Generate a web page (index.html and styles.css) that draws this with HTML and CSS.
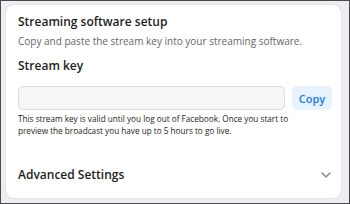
FILE: index.html
```html
<!DOCTYPE html>
<html>
<head>
<meta charset="utf-8">
<link rel="stylesheet" href="styles.css">
</head>
<body>
<div class="frame">
  <div class="card">
    <h2 class="title">Streaming software setup</h2>
    <p class="sub">Copy and paste the stream key into your streaming software.</p>
    <h3 class="label">Stream key</h3>
    <div class="keyrow">
      <div class="input"></div>
      <button class="copy">Copy</button>
    </div>
    <p class="help">This stream key is valid until you log out of Facebook. Once you start to preview the broadcast you have up to 5 hours to go live.</p>
    <div class="adv">
      <span class="adv-label">Advanced Settings</span>
      <svg class="chev" width="10" height="6" viewBox="0 0 10 6"><path d="M1 1 L5 5 L9 1" fill="none" stroke="#8a8d91" stroke-width="1.6" stroke-linecap="round" stroke-linejoin="round"/></svg>
    </div>
  </div>
</div>
</body>
</html>
```
FILE: styles.css
```css
html, body { margin: 0; padding: 0; }
body { width: 350px; height: 204px; overflow: hidden; font-family: "Open Sans", "Noto Sans", sans-serif; }
.frame {
  box-sizing: border-box;
  width: 350px; height: 204px;
  border: 1px solid #4a4a4a;
  background: #eceef1;
  padding: 4px 8px 5px 5px;
  display: flex;
}
.card {
  flex: 1;
  background: #fff;
  border-radius: 8px;
  box-shadow: 0 0 2px rgba(0,0,0,0.15);
  padding: 9px 0 0 12px;
  display: flex; flex-direction: column;
}
.title { margin: 0; font-size: 12px; font-weight: 600; color: #1c1e21; line-height: 16px; }
.sub { margin: 4px 0 0; font-size: 10px; color: #65676b; line-height: 14px; }
.label { margin: 10px 0 0; font-size: 12px; font-weight: 600; color: #1c1e21; line-height: 16px; }
.keyrow { display: flex; gap: 7px; margin-top: 12px; padding-right: 9px; }
.input { flex: 1; height: 22px; background: #f5f6f7; border: 1px solid #dadde1; border-radius: 5px; }
.copy { width: 40px; height: 24px; border: 0; border-radius: 5px; background: #e7f3ff; color: #1877f2; font-family: inherit; font-weight: 600; font-size: 11px; padding: 0; }
.help { margin: 3px 0 0; font-size: 8.2px; line-height: 12px; color: #1c1e21; max-width: 294px; }
.adv { display: flex; align-items: center; justify-content: space-between; margin-top: 29px; padding-right: 10px; }
.adv-label { font-size: 12px; font-weight: 600; color: #1c1e21; }
```
